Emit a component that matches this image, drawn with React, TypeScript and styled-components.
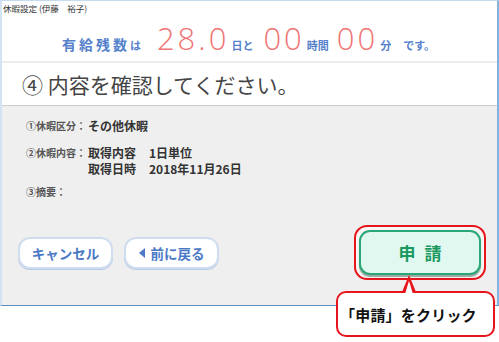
import styled, { createGlobalStyle } from 'styled-components';

const GlobalStyle = createGlobalStyle`
  html, body {
    margin: 0;
    padding: 0;
    background: #fff;
  }
  body {
    font-family: "Noto Sans CJK JP", "Noto Sans", sans-serif;
    width: 499px;
    height: 342px;
    overflow: hidden;
  }
`;

const Stage = styled.div`
  position: relative;
  width: 499px;
  height: 342px;
`;

const Window = styled.div`
  box-sizing: border-box;
  width: 499px;
  height: 306px;
  display: flex;
  flex-direction: column;
  border-top: 1px solid #c4dbf0;
  border-left: 2px solid #d2e3f3;
  border-right: 2px solid #7fb3e0;
  border-bottom: 1px solid #5a8ec0;
  background: #fff;
`;

const TitleBar = styled.div`
  height: 14px;
  padding: 1px 0 0 1px;
  font-size: 8.5px;
  line-height: 12px;
  color: #333;
  white-space: pre;
`;

const Summary = styled.div`
  height: 45px;
  display: flex;
  justify-content: center;
  align-items: baseline;
  color: #5581cc;
  font-weight: bold;
  line-height: 45px;
`;

const Label = styled.span<{ $size?: number; $gap?: number }>`
  font-size: ${(p) => p.$size || 14}px;
  letter-spacing: ${(p) => p.$gap || 0}px;
  margin-right: ${(p) => p.$gap ? 0 : 2}px;
`;

const Digits = styled.span<{ $left?: number }>`
  font-family: "Open Sans", "Liberation Sans", sans-serif;
  font-weight: 300;
  font-size: 31px;
  letter-spacing: 3px;
  color: #f07474;
  margin: 0 2px 0 ${(p) => p.$left || 0}px;
`;

const Divider = styled.div`
  height: 2px;
  background: #ececec;
`;

const Heading = styled.h1`
  margin: 0;
  height: 42px;
  padding-left: 20px;
  display: flex;
  align-items: center;
  font-size: 21px;
  font-weight: normal;
  color: #444;
  border-bottom: 1px solid #cdcdcd;
`;

const Body = styled.div`
  flex: 1;
  background: #efefef;
  padding: 12px 11px 0 16px;
  display: flex;
  flex-direction: column;
`;

const Details = styled.div`
  display: grid;
  grid-template-columns: 62px auto;
  padding-left: 8px;
`;

const Term = styled.div<{ $mt?: number }>`
  font-size: 10px;
  font-weight: bold;
  color: #555;
  line-height: 16px;
  margin-top: ${(p) => p.$mt || 0}px;
`;

const Value = styled.div<{ $mt?: number }>`
  font-size: 12px;
  font-weight: bold;
  color: #333;
  line-height: 16px;
  margin-top: ${(p) => p.$mt || 0}px;
  display: flex;
  flex-direction: column;
`;

const ValueLine = styled.div`
  display: flex;
  gap: 13px;
`;

const Buttons = styled.div`
  display: flex;
  align-items: center;
  gap: 11px;
  margin-top: 25px;
`;

const SubButton = styled.button`
  box-sizing: border-box;
  width: 95px;
  height: 32px;
  border: 2px solid #d0ddf0;
  border-radius: 12px;
  background: #fff;
  box-shadow: 0 1px 0 #b9cbe4;
  color: #4b79c6;
  font-family: inherit;
  font-size: 13.5px;
  font-weight: bold;
  display: flex;
  align-items: center;
  justify-content: center;
  gap: 6px;
  padding: 0;
`;

const BackArrow = styled.span`
  width: 0;
  height: 0;
  border-top: 5px solid transparent;
  border-bottom: 5px solid transparent;
  border-right: 6px solid #4b79c6;
`;

const Highlight = styled.div`
  margin-left: auto;
  border: 2px solid #e8141c;
  border-radius: 13px;
  padding: 3px;
  background: #f6f6f6;
`;

const ApplyButton = styled.button`
  box-sizing: border-box;
  width: 122px;
  height: 45px;
  border: 2px solid #2ba676;
  border-radius: 11px;
  background: #e0f8ef;
  box-shadow: 0 2px 1px #9aa8a2;
  color: #1a9960;
  font-family: inherit;
  font-size: 17px;
  font-weight: bold;
  letter-spacing: 9px;
  padding: 0 0 0 9px;
  display: block;
`;

const Callout = styled.div`
  position: absolute;
  left: 336px;
  top: 291px;
  box-sizing: border-box;
  width: 159px;
  height: 46px;
  border: 2px solid #e8141c;
  border-radius: 10px;
  background: #fff;
  display: flex;
  align-items: center;
  padding-left: 2px;
  font-size: 15px;
  font-weight: bold;
  color: #111;
  letter-spacing: 0.2px;
  &::before {
    content: '';
    position: absolute;
    left: 64px;
    top: -18px;
    border-left: 7px solid transparent;
    border-right: 7px solid transparent;
    border-bottom: 17px solid #e8141c;
  }
  &::after {
    content: '';
    position: absolute;
    left: 67px;
    top: -12px;
    border-left: 4px solid transparent;
    border-right: 4px solid transparent;
    border-bottom: 13px solid #fff;
  }
`;

function App() {
  return (
    <Stage>
      <GlobalStyle />
      <Window>
        <TitleBar>休暇設定 (伊藤　裕子)</TitleBar>
        <Summary>
          <Label $gap={3}>有給残数</Label>
          <Label $size={11}>は</Label>
          <Digits $left={14}>28.0</Digits>
          <Label $size={11}>日と</Label>
          <Digits $left={8}>00</Digits>
          <Label $size={11}>時間</Label>
          <Digits $left={6}>00</Digits>
          <Label $size={11}>分</Label>
          <Label $size={11} style={{ marginLeft: 10 }}>です。</Label>
        </Summary>
        <Divider />
        <Heading>④ 内容を確認してください。</Heading>
        <Body>
          <Details>
            <Term>①休暇区分：</Term>
            <Value>その他休暇</Value>
            <Term $mt={11}>②休暇内容：</Term>
            <Value $mt={11}>
              <ValueLine><span>取得内容</span><span>1日単位</span></ValueLine>
              <ValueLine><span>取得日時</span><span>2018年11月26日</span></ValueLine>
            </Value>
            <Term $mt={7}>③摘要：</Term>
            <Value $mt={7} />
          </Details>
          <Buttons>
            <SubButton>キャンセル</SubButton>
            <SubButton><BackArrow />前に戻る</SubButton>
            <Highlight>
              <ApplyButton>申請</ApplyButton>
            </Highlight>
          </Buttons>
        </Body>
      </Window>
      <Callout>「申請」をクリック</Callout>
    </Stage>
  );
}

export default App;
